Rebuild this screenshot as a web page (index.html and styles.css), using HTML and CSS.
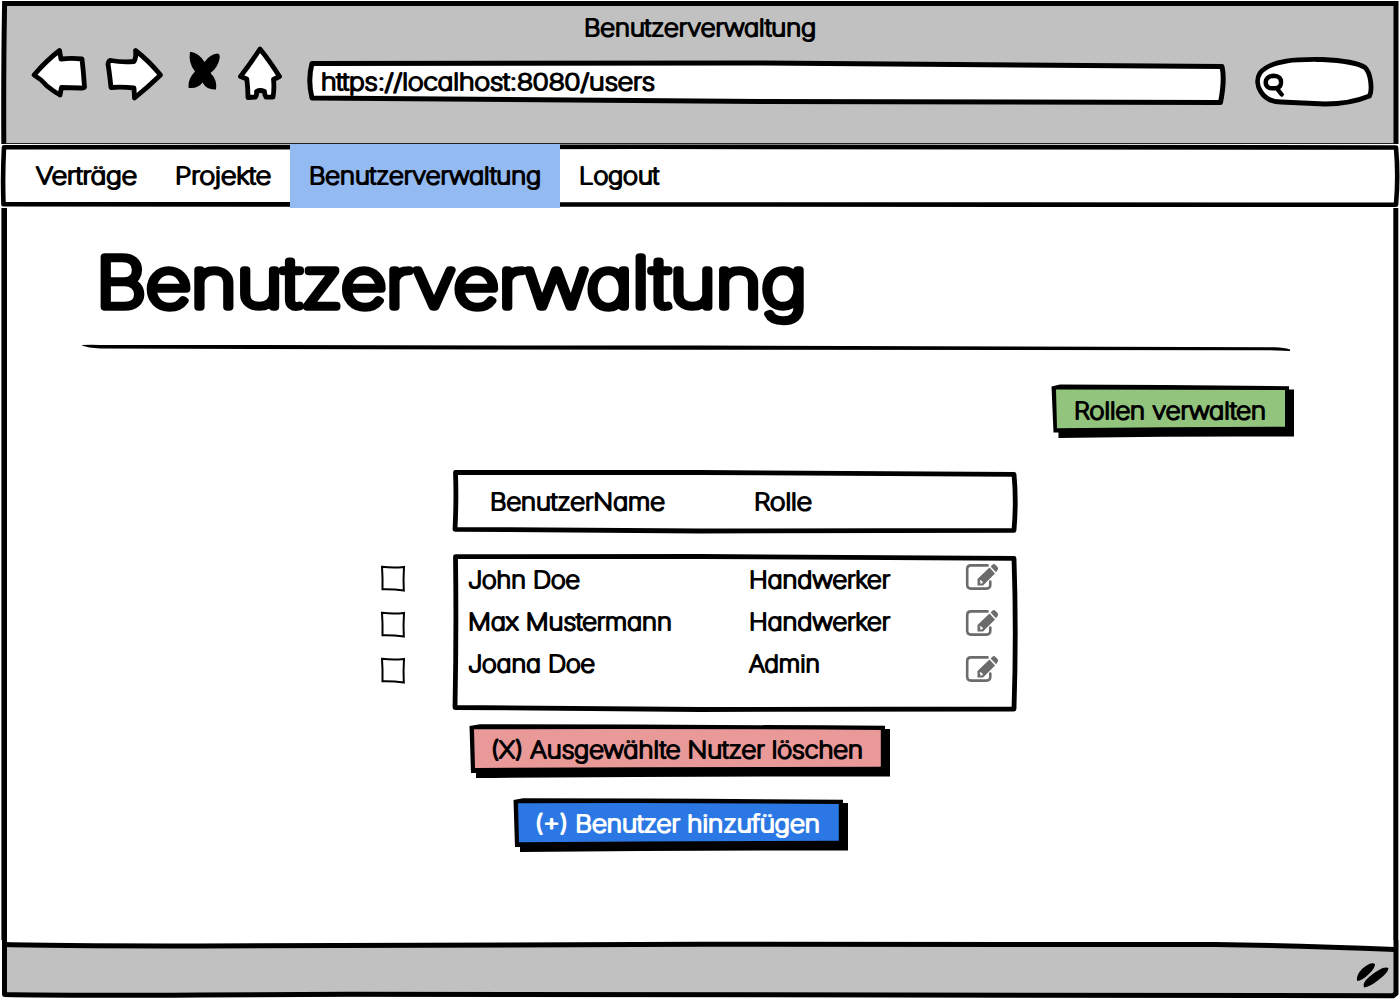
FILE: index.html
```
<!DOCTYPE html>
<html lang="de">
<head>
<meta charset="utf-8">
<title>Benutzerverwaltung</title>
<link rel="stylesheet" href="styles.css">
</head>
<body>
<svg width="0" height="0" class="defs" aria-hidden="true">
  <symbol id="box" viewBox="378 563 30 31">
    <path fill="#fff" stroke="#000" stroke-width="2" d="M382 566.8 Q393 568.3 404 567 Q403.2 579 403.8 590.6 Q393 589 382.5 589.3 Q382.8 578 382 566.8Z"/>
  </symbol>
  <symbol id="edit" viewBox="964 562 36 30">
    <path fill="none" stroke="#6b6b6b" stroke-width="2.6" stroke-linecap="round" d="M987.5 565.4H971Q967.2 565.4 967.2 569.2V584.8Q967.2 588.6 971 588.6H986.5Q990.3 588.6 990.3 584.8V581.5"/>
    <path fill="#6b6b6b" d="M977.5 585.5V579L989.5 567.6L995 573.4L983 585.5ZM990.6 566.4L992.4 564.7Q994 563.3 995.6 564.9L997.5 566.9Q998.9 568.4 997.6 570.1L996 572.2Z"/>
    <path fill="none" stroke="#fff" stroke-width="1.4" d="M980 580.5L982.5 583M980.5 583.5L982 581"/>
  </symbol>
</svg>

<header class="chrome">
  <svg class="sketch" viewBox="0 0 1400 144">
    <path fill="#c1c1c1" d="M4 3H1396V143H4Z"/>
    <path fill="none" stroke="#000" stroke-width="5" d="M3.800 144Q3.400 70 4.600 3.600H1396V144"/>
    <path stroke="#222" stroke-width="1" d="M6 143.500H1394"/>
  </svg>
  <svg class="label" width="232" height="30"><text x="0" y="22" textLength="232" lengthAdjust="spacingAndGlyphs">Benutzerverwaltung</text></svg>
  <div class="toolbar">
    <svg class="icon back" viewBox="30 44 58 60"><path d="M34 75Q46 61 59.500 50.500L61 59Q72 57.600 82 59Q83.500 72 84.500 87Q84 88.500 80 88L61.500 87.500L60 95Q53 91 47 86Q41 79 34 75Z"/></svg>
    <svg class="icon forward" viewBox="104 44 60 60"><path d="M111 60.500Q122 62.500 134 61.500Q136.500 57 135.500 50.500Q149 61 160.500 75Q148 87 134.500 98L134 88Q122 86.500 111 87.500Q109.500 73 108 64Q108.500 60.500 111 60.500Z"/></svg>
    <svg class="icon stop" viewBox="186 44 36 60"><path d="M190 51.800Q199 53 204.500 62Q210 54 217.500 53.500Q220.500 54 219.500 59Q217.500 68 210.500 73Q217.500 80 216 89.500Q206.500 90 202.500 82.500Q198 89 188.500 87.800Q187.500 79 195 71.500Q188 63 190 51.800Z"/></svg>
    <svg class="icon home" viewBox="236 44 48 60"><path d="M260 49Q269 60 279.500 76.500L273.500 79.500Q274.500 88 273 97.200H266Q264.500 95 264.500 91.500Q260 89.500 256.500 91.500Q257 95 255.500 97L248 97.500Q248 88 246.800 79L240.500 76.500Q250 64 260 49Z"/></svg>
    <div class="address">
      <svg class="sketch" viewBox="306 56 922 52"><path fill="#fff" stroke="#000" stroke-width="5" stroke-linejoin="round" d="M312 63.500L760 63L1222 66.500Q1225 80 1220.500 102.500L760 101.500L312 98Q307.500 80 312 63.500Z"/></svg>
      <svg class="label" width="334" height="30"><text x="0" y="22" textLength="334" lengthAdjust="spacingAndGlyphs">https://localhost:8080/users</text></svg>
    </div>
    <svg class="icon search" viewBox="1252 52 126 60">
      <path d="M1281 102C1262 102 1253 84 1260 73C1272 58 1305 59.500 1322 59.500Q1355 61 1365 67.500C1371 73 1372.500 90 1369.500 96Q1350 104 1325 104Q1303 103 1281 102Z"/>
      <path class="lens" d="M1277 87.800Q1265.500 90 1265.700 82Q1266.500 76 1273.500 75.800Q1281.500 76 1281 83Q1280.500 88 1276.500 88L1281.700 94.500"/>
    </svg>
  </div>
</header>

<nav class="menu">
  <svg class="sketch" viewBox="0 144 1400 64"><path fill="#fff" stroke="#000" stroke-width="4.600" stroke-linejoin="round" d="M4 147.300Q700 146.200 1396 147.500Q1398.500 176 1396 204.800Q700 204 3.500 204.300Q2.500 176 4 147.300Z"/></svg>
  <a class="tab"><svg class="label" width="101" height="30"><text x="0" y="22" textLength="101" lengthAdjust="spacingAndGlyphs">Verträge</text></svg></a>
  <a class="tab"><svg class="label" width="96" height="30"><text x="0" y="22" textLength="96" lengthAdjust="spacingAndGlyphs">Projekte</text></svg></a>
  <a class="tab active"><svg class="label" width="232" height="30"><text x="0" y="22" textLength="232" lengthAdjust="spacingAndGlyphs">Benutzerverwaltung</text></svg></a>
  <a class="tab"><svg class="label" width="80" height="30"><text x="0" y="22" textLength="80" lengthAdjust="spacingAndGlyphs">Logout</text></svg></a>
</nav>

<main>
  <svg class="sketch" viewBox="0 208 1400 732"><path stroke="#000" stroke-width="5.600" d="M4.200 208V940"/><path stroke="#000" stroke-width="5" d="M1395.800 208V940"/></svg>
  <h1><svg class="label title" width="710" height="90"><text x="-2" y="67" textLength="711" lengthAdjust="spacingAndGlyphs">Benutzerverwaltung</text></svg></h1>
  <svg class="rule" viewBox="0 330 1400 26"><path d="M82 345Q88 344.600 100 344.900L700 345.600L1275 347.300Q1284 347.500 1290 349.500V351L1270 350.200L700 349.800L100 348.600Q88 347.800 82 345.500Z"/></svg>

  <button class="btn roles">
    <svg class="sketch" viewBox="1048 380 250 60">
      <path d="M1058 389L1294 389.500V436.500Q1150 436 1058.500 438Z"/>
      <path d="M1051.500 386.500L1060 384.500Q1170 385 1289 386.200V432L1053.500 432.500Z"/>
      <path fill="#93c47d" d="M1056 389.500Q1170 390 1285 390V426.800Q1170 427 1057 428.200Z"/>
    </svg>
    <svg class="label" width="192" height="30"><text x="0" y="22" textLength="192" lengthAdjust="spacingAndGlyphs">Rollen verwalten</text></svg>
  </button>

  <div class="table-head">
    <svg class="sketch" viewBox="450 468 570 66"><path class="frame" d="M455.500 472.500L700 472.500L1014 474.300Q1016.500 500 1014 530.300Q740 531 700 531L455 529.300Q456.500 500 455.500 472.500Z"/></svg>
    <svg class="label" width="175" height="30"><text x="0" y="22" textLength="175" lengthAdjust="spacingAndGlyphs">BenutzerName</text></svg>
    <svg class="label" width="58" height="30"><text x="0" y="22" textLength="58" lengthAdjust="spacingAndGlyphs">Rolle</text></svg>
  </div>

  <div class="table">
    <div class="checks">
      <svg class="check"><use href="#box"/></svg>
      <svg class="check"><use href="#box"/></svg>
      <svg class="check"><use href="#box"/></svg>
    </div>
    <div class="rows">
      <svg class="sketch" viewBox="450 552 570 162"><path class="frame" d="M455.500 556.700L700 556.500L1014 558.300Q1016.500 632 1014 709Q740 709.500 700 709.500L455 707.500Q456.500 632 455.500 556.700Z"/></svg>
      <div class="names">
        <svg class="label" width="112" height="30"><text x="0" y="22" textLength="112" lengthAdjust="spacingAndGlyphs">John Doe</text></svg>
        <svg class="label" width="204" height="30"><text x="0" y="22" textLength="204" lengthAdjust="spacingAndGlyphs">Max Mustermann</text></svg>
        <svg class="label" width="128" height="30"><text x="0" y="22" textLength="127" lengthAdjust="spacingAndGlyphs">Joana Doe</text></svg>
      </div>
      <div class="names">
        <svg class="label" width="142" height="30"><text x="0" y="22" textLength="141" lengthAdjust="spacingAndGlyphs">Handwerker</text></svg>
        <svg class="label" width="142" height="30"><text x="0" y="22" textLength="141" lengthAdjust="spacingAndGlyphs">Handwerker</text></svg>
        <svg class="label" width="72" height="30"><text x="0" y="22" textLength="71" lengthAdjust="spacingAndGlyphs">Admin</text></svg>
      </div>
      <div class="edits">
        <svg class="edit"><use href="#edit"/></svg>
        <svg class="edit"><use href="#edit"/></svg>
        <svg class="edit"><use href="#edit"/></svg>
      </div>
    </div>
  </div>

  <button class="btn delete">
    <svg class="sketch" viewBox="467 722 426 58">
      <path d="M476 729H890V776.500Q680 776 476 778Z"/>
      <path d="M469.500 726L480 724.300Q680 724.500 885 725.800V772L471 773Z"/>
      <path fill="#ea9999" d="M474 729.300Q680 728.500 880.800 730V766.800Q680 767 475 768Z"/>
    </svg>
    <svg class="label" width="372" height="30"><text x="0" y="22" textLength="372" lengthAdjust="spacingAndGlyphs">(X) Ausgewählte Nutzer löschen</text></svg>
  </button>

  <button class="btn add">
    <svg class="sketch" viewBox="511 796 340 58">
      <path d="M520 803H848V850.500Q680 850 520 852Z"/>
      <path d="M513.500 800L523 798.300Q680 798.500 843 799.800V846L515 847Z"/>
      <path fill="#2b78e4" d="M518 803.300Q680 802.500 838.800 804V840.800Q680 841 519 842.200Z"/>
    </svg>
    <svg class="label" width="285" height="30"><text x="0" y="22" textLength="285" lengthAdjust="spacingAndGlyphs">(+) Benutzer hinzufügen</text></svg>
  </button>
</main>

<footer>
  <svg class="sketch" viewBox="0 940 1400 60">
    <path fill="#c1c1c1" d="M4 944.600L1215 944.500Q1300 945.500 1395 949.500V997H4Z"/>
    <path fill="none" stroke="#000" stroke-width="5" stroke-linejoin="round" d="M4.500 940V994.600Q60 995.800 200 995L350 994.200Q700 996 1393 995.800L1396 993.500V940"/>
    <path fill="none" stroke="#000" stroke-width="5" d="M4 944.600Q60 946 200 946L700 944.300L1215 944.500Q1300 945.500 1395 949.500"/>
    <path d="M1357 981Q1356 975 1362 969Q1371 961 1375 964Q1375 968 1370 973Q1362 981 1357 981ZM1364 987.500Q1362 983 1369 977Q1383 965 1388.500 968Q1388 973 1379 979.500Q1370 987 1364 987.500Z"/>
  </svg>
</footer>
</body>
</html>
```
FILE: styles.css
```
* { box-sizing: border-box; }

body {
  margin: 0;
  width: 1400px;
  height: 1000px;
  display: flex;
  flex-direction: column;
  background: #fff;
  font-family: Inter, "Open Sans", sans-serif;
  overflow: hidden;
}

svg { display: block; flex: none; }
.defs { position: absolute; }

/* hand-drawn outline that lies behind a component's content */
.sketch {
  position: absolute;
  inset: 0;
  width: 100%;
  height: 100%;
}

/* thin letters, thickened by a round pen */
.label {
  position: relative;
  overflow: visible;
  font-size: 22.5px;
  font-weight: 100;
  font-feature-settings: "cv11";
  fill: #000;
  stroke: #000;
  stroke-width: 2.2px;
  stroke-linejoin: round;
  stroke-linecap: round;
}

.label.title { font-size: 68px; stroke-width: 7.4px; }

.chrome {
  position: relative;
  height: 144px;
  padding-top: 14px;
  display: flex;
  flex-direction: column;
  align-items: center;
}

.toolbar {
  position: relative;
  align-self: stretch;
  display: flex;
  padding-left: 30px;
}

.icon { height: 60px; fill: #fff; stroke: #000; stroke-width: 4.8px; stroke-linejoin: round; stroke-linecap: round; }
.back { width: 58px; margin-right: 16px; }
.forward { width: 60px; margin-right: 22px; }
.stop { width: 36px; margin-right: 14px; fill: #000; stroke: none; }
.home { width: 48px; margin-right: 22px; }
.search { width: 126px; margin: 8px 0 0 24px; }
.lens { stroke-width: 4.4px; }

.address {
  position: relative;
  width: 922px;
  height: 52px;
  margin-top: 12px;
  padding: 12px 0 0 15px;
}

.menu {
  position: relative;
  height: 64px;
  padding-left: 17px;
  display: flex;
}

.tab { position: relative; padding: 18px 19px 0; }
.active { background: #94baf2; }

main {
  position: relative;
  height: 732px;
  display: flex;
  flex-direction: column;
}

h1 { margin: 32px 0 0 98px; height: 90px; }

.rule { width: 1400px; height: 26px; }

.btn {
  position: relative;
  border: 0;
  background: none;
  font-family: inherit;
  text-align: left;
}

.roles { width: 250px; height: 60px; margin: 24px 102px 0 auto; padding: 3px 0 0 26px; }
.delete { width: 426px; height: 58px; margin: 8px 0 0 467px; padding: 0 0 0 24px; }
.add { width: 340px; height: 58px; margin: 16px 0 0 511px; padding: 0 0 0 24px; }
.add .label { fill: #fff; stroke: #fff; }

.frame { fill: #fff; stroke: #000; stroke-width: 4.8px; stroke-linejoin: round; }

.table-head {
  position: relative;
  width: 570px;
  height: 66px;
  margin: 28px 0 0 450px;
  padding: 20px 0 0 40px;
  display: grid;
  grid-template-columns: 264px 1fr;
}

.table {
  margin-top: 18px;
  padding-left: 378px;
  display: flex;
  gap: 42px;
}

.checks { display: flex; flex-direction: column; gap: 15px; padding-top: 11px; }
.check { width: 30px; height: 31px; }

.rows {
  position: relative;
  width: 570px;
  height: 162px;
  padding-left: 18px;
  display: grid;
  grid-template-columns: 281px 215px 36px;
}

.names { display: flex; flex-direction: column; gap: 12px; padding-top: 14px; }
.edits { position: relative; display: flex; flex-direction: column; gap: 16px; padding-top: 10px; }
.edit { width: 36px; height: 30px; }

footer { position: relative; height: 60px; }
```
